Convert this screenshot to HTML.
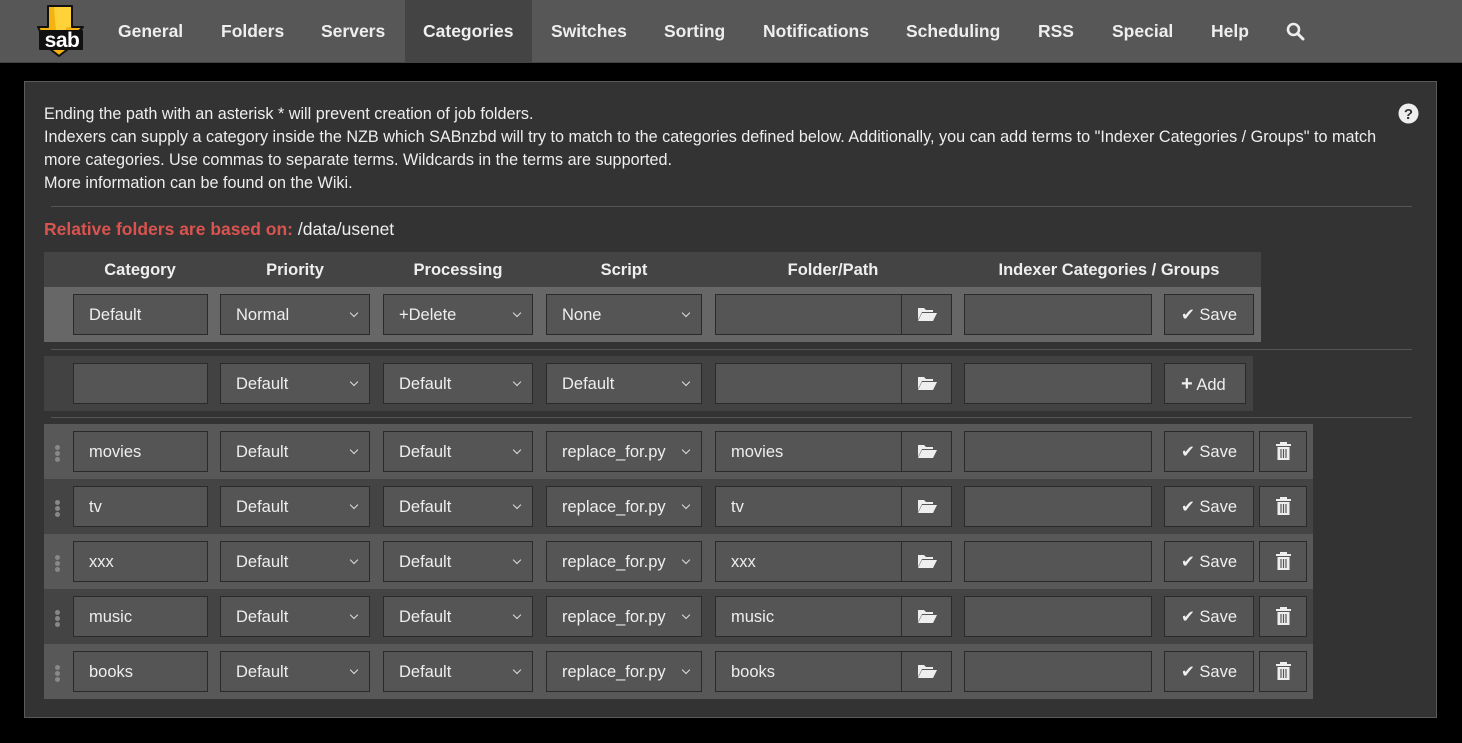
<!DOCTYPE html>
<html><head><meta charset="utf-8">
<style>
*{box-sizing:border-box;margin:0;padding:0}
body{width:1462px;height:743px;background:#000;font-family:"Liberation Sans",Arial,sans-serif;color:#eee;position:relative;overflow:hidden}
.nav{position:absolute;left:0;top:0;width:1462px;height:63px;background:#575757;border-bottom:1px solid #444}
.nav span{position:absolute;top:21px;font-weight:bold;font-size:17.5px;color:#eee;white-space:nowrap}
.act{position:absolute;left:405px;top:0;width:127px;height:63px;background:#444}
.panel{position:absolute;left:24px;top:81px;width:1413px;height:637px;background:#333;border:1px solid #5a5a5a}
.txt{position:absolute;left:19px;top:21px;font-size:16.2px;line-height:23px;color:#eee;width:1350px}
.hr{position:absolute;height:1px;background:#555}
.rel{position:absolute;left:19px;top:137px;font-size:17.5px}
.rel b{color:#d9534f}
.row{position:absolute;left:19px;height:55px}
.row>div{position:absolute;top:7px;height:41px;background:#555;border:1px solid #2a2a2a;font-size:16.5px;line-height:41px;padding-left:15px;color:#eee;white-space:nowrap}
.c1{left:29px;width:135px}
.c2{left:176px;width:150px}
.c3{left:339px;width:150px}
.c4{left:502px;width:156px}
.c5{left:671px;width:188px}
.fb{left:857px;width:51px;padding:0!important}
.c6{left:920px;width:188px}
.sv{left:1120px;width:90px;padding-left:16px!important}
.dl{left:1215px;width:48px;padding:0!important}
.ch{position:absolute;right:12px;top:15px;width:6px;height:6px;border-right:1.5px solid #ddd;border-bottom:1.5px solid #ddd;transform:rotate(45deg)}
.row>.dots{left:11px;top:21px;width:5px;height:16px;background:none;border:none;padding:0}
.dots i{display:block;width:5px;height:5px;border-radius:50%;background:#888;margin-bottom:1px}
.head{position:absolute;left:19px;top:170px;width:1217px;height:35px;background:#444}
.head span{position:absolute;top:9px;font-weight:bold;font-size:16.5px;color:#eee;transform:translateX(-50%);white-space:nowrap}
svg{display:block}
</style></head><body>
<div class="nav">
<svg style="position:absolute;left:37px;top:4px" width="50" height="54" viewBox="0 0 50 54">
<path d="M11 2h24v21h11l-4 4v18H31l-9 7-9-7H3V27l-2-4h10z" fill="#f5b30f" stroke="#111" stroke-width="2" stroke-linejoin="round"/>
<path d="M17 3h17v20h-4L20 40z" fill="#ffd23a"/>
<rect x="4" y="26" width="42" height="20" fill="#111"/>
<text x="25" y="43" text-anchor="middle" font-family="Liberation Sans" font-weight="bold" font-size="21" fill="#fff" letter-spacing="-0.5">sab</text>
</svg>
<div class="act"></div>
<span style="left:118px">General</span>
<span style="left:221px">Folders</span>
<span style="left:321px">Servers</span>
<span style="left:423px">Categories</span>
<span style="left:551px">Switches</span>
<span style="left:664px">Sorting</span>
<span style="left:763px">Notifications</span>
<span style="left:906px">Scheduling</span>
<span style="left:1038px">RSS</span>
<span style="left:1112px">Special</span>
<span style="left:1211px">Help</span>
<svg style="position:absolute;left:1286px;top:22px" width="19" height="19" viewBox="0 0 19 19"><circle cx="7.5" cy="7.5" r="5.5" fill="none" stroke="#eee" stroke-width="2.6"/><path d="M11.5 11.5l5.5 5.5" stroke="#eee" stroke-width="3" stroke-linecap="round"/></svg>
</div>

<div class="panel">
<div class="txt">Ending the path with an asterisk * will prevent creation of job folders.<br>Indexers can supply a category inside the NZB which SABnzbd will try to match to the categories defined below. Additionally, you can add terms to "Indexer Categories / Groups" to match more categories. Use commas to separate terms. Wildcards in the terms are supported.<br>More information can be found on the Wiki.</div>
<svg style="position:absolute;left:1373px;top:21px" width="21" height="21" viewBox="0 0 21 21"><circle cx="10.5" cy="10.5" r="10" fill="#eee"/><text x="10.5" y="16" text-anchor="middle" font-family="Liberation Sans" font-weight="bold" font-size="15" fill="#333">?</text></svg>
<div class="hr" style="left:26px;top:124px;width:1361px"></div>
<div class="rel"><b>Relative folders are based on:</b> /data/usenet</div>
<div class="head"><span style="left:96px">Category</span><span style="left:251px">Priority</span><span style="left:414px">Processing</span><span style="left:580px">Script</span><span style="left:789px">Folder/Path</span><span style="left:1065px">Indexer Categories / Groups</span></div>

<div class="row" style="top:205px;width:1217px;background:#676767">
<div class="c1">Default</div><div class="c2">Normal<i class="ch"></i></div><div class="c3">+Delete<i class="ch"></i></div><div class="c4">None<i class="ch"></i></div><div class="c5"></div><div class="fb"><svg style="margin:11px 0 0 15px" width="20" height="16" viewBox="0 0 20 16"><path d="M1 2h6l2 2h7v2H5L1 14z" fill="#eee"/><path d="M5 7h15l-4 8H1z" fill="#eee"/></svg></div><div class="c6"></div><div class="sv">&#10004; Save</div>
</div>
<div class="hr" style="left:26px;top:267px;width:1361px"></div>
<div class="row" style="top:274px;width:1209px;background:#424242">
<div class="c1"></div><div class="c2">Default<i class="ch"></i></div><div class="c3">Default<i class="ch"></i></div><div class="c4">Default<i class="ch"></i></div><div class="c5"></div><div class="fb"><svg style="margin:11px 0 0 15px" width="20" height="16" viewBox="0 0 20 16"><path d="M1 2h6l2 2h7v2H5L1 14z" fill="#eee"/><path d="M5 7h15l-4 8H1z" fill="#eee"/></svg></div><div class="c6"></div><div class="sv" style="width:82px"><b style="font-size:20px">+</b> Add</div>
</div>
<div class="hr" style="left:26px;top:335px;width:1361px"></div>

<div class="row" style="top:342px;width:1269px;background:#585858"><div class="dots"><i></i><i></i><i></i></div>
<div class="c1">movies</div><div class="c2">Default<i class="ch"></i></div><div class="c3">Default<i class="ch"></i></div><div class="c4">replace_for.py<i class="ch"></i></div><div class="c5">movies</div><div class="fb"><svg style="margin:11px 0 0 15px" width="20" height="16" viewBox="0 0 20 16"><path d="M1 2h6l2 2h7v2H5L1 14z" fill="#eee"/><path d="M5 7h15l-4 8H1z" fill="#eee"/></svg></div><div class="c6"></div><div class="sv">&#10004; Save</div><div class="dl"><svg style="margin:10px 0 0 16px" width="15" height="19" viewBox="0 0 15 19"><path d="M0 3h15M5 3V1h5v2" stroke="#eee" stroke-width="2" fill="none"/><path d="M1.5 5h12v13h-12z" fill="#eee"/><path d="M5 7v9M7.5 7v9M10 7v9" stroke="#555" stroke-width="1.2"/></svg></div>
</div>
<div class="row" style="top:397px;width:1269px;background:#444"><div class="dots"><i></i><i></i><i></i></div>
<div class="c1">tv</div><div class="c2">Default<i class="ch"></i></div><div class="c3">Default<i class="ch"></i></div><div class="c4">replace_for.py<i class="ch"></i></div><div class="c5">tv</div><div class="fb"><svg style="margin:11px 0 0 15px" width="20" height="16" viewBox="0 0 20 16"><path d="M1 2h6l2 2h7v2H5L1 14z" fill="#eee"/><path d="M5 7h15l-4 8H1z" fill="#eee"/></svg></div><div class="c6"></div><div class="sv">&#10004; Save</div><div class="dl"><svg style="margin:10px 0 0 16px" width="15" height="19" viewBox="0 0 15 19"><path d="M0 3h15M5 3V1h5v2" stroke="#eee" stroke-width="2" fill="none"/><path d="M1.5 5h12v13h-12z" fill="#eee"/><path d="M5 7v9M7.5 7v9M10 7v9" stroke="#555" stroke-width="1.2"/></svg></div>
</div>
<div class="row" style="top:452px;width:1269px;background:#585858"><div class="dots"><i></i><i></i><i></i></div>
<div class="c1">xxx</div><div class="c2">Default<i class="ch"></i></div><div class="c3">Default<i class="ch"></i></div><div class="c4">replace_for.py<i class="ch"></i></div><div class="c5">xxx</div><div class="fb"><svg style="margin:11px 0 0 15px" width="20" height="16" viewBox="0 0 20 16"><path d="M1 2h6l2 2h7v2H5L1 14z" fill="#eee"/><path d="M5 7h15l-4 8H1z" fill="#eee"/></svg></div><div class="c6"></div><div class="sv">&#10004; Save</div><div class="dl"><svg style="margin:10px 0 0 16px" width="15" height="19" viewBox="0 0 15 19"><path d="M0 3h15M5 3V1h5v2" stroke="#eee" stroke-width="2" fill="none"/><path d="M1.5 5h12v13h-12z" fill="#eee"/><path d="M5 7v9M7.5 7v9M10 7v9" stroke="#555" stroke-width="1.2"/></svg></div>
</div>
<div class="row" style="top:507px;width:1269px;background:#444"><div class="dots"><i></i><i></i><i></i></div>
<div class="c1">music</div><div class="c2">Default<i class="ch"></i></div><div class="c3">Default<i class="ch"></i></div><div class="c4">replace_for.py<i class="ch"></i></div><div class="c5">music</div><div class="fb"><svg style="margin:11px 0 0 15px" width="20" height="16" viewBox="0 0 20 16"><path d="M1 2h6l2 2h7v2H5L1 14z" fill="#eee"/><path d="M5 7h15l-4 8H1z" fill="#eee"/></svg></div><div class="c6"></div><div class="sv">&#10004; Save</div><div class="dl"><svg style="margin:10px 0 0 16px" width="15" height="19" viewBox="0 0 15 19"><path d="M0 3h15M5 3V1h5v2" stroke="#eee" stroke-width="2" fill="none"/><path d="M1.5 5h12v13h-12z" fill="#eee"/><path d="M5 7v9M7.5 7v9M10 7v9" stroke="#555" stroke-width="1.2"/></svg></div>
</div>
<div class="row" style="top:562px;width:1269px;background:#585858"><div class="dots"><i></i><i></i><i></i></div>
<div class="c1">books</div><div class="c2">Default<i class="ch"></i></div><div class="c3">Default<i class="ch"></i></div><div class="c4">replace_for.py<i class="ch"></i></div><div class="c5">books</div><div class="fb"><svg style="margin:11px 0 0 15px" width="20" height="16" viewBox="0 0 20 16"><path d="M1 2h6l2 2h7v2H5L1 14z" fill="#eee"/><path d="M5 7h15l-4 8H1z" fill="#eee"/></svg></div><div class="c6"></div><div class="sv">&#10004; Save</div><div class="dl"><svg style="margin:10px 0 0 16px" width="15" height="19" viewBox="0 0 15 19"><path d="M0 3h15M5 3V1h5v2" stroke="#eee" stroke-width="2" fill="none"/><path d="M1.5 5h12v13h-12z" fill="#eee"/><path d="M5 7v9M7.5 7v9M10 7v9" stroke="#555" stroke-width="1.2"/></svg></div>
</div>
</div>
</body></html>
